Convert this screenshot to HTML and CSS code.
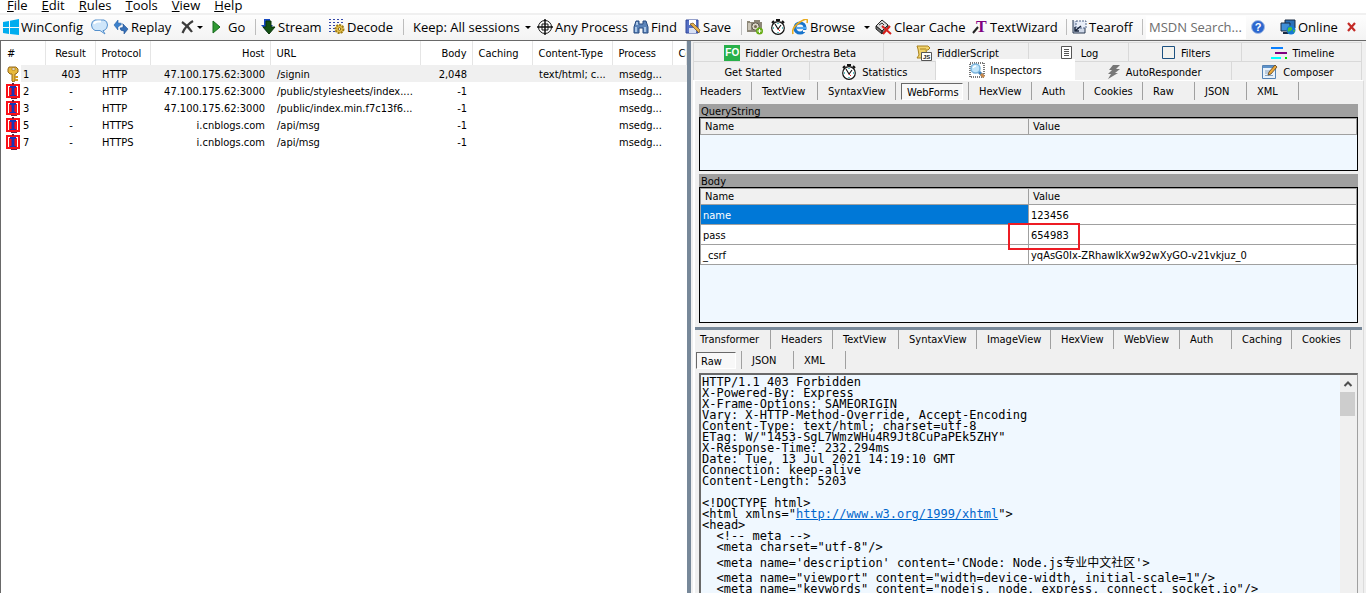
FILE: index.html
```
<!DOCTYPE html>
<html lang="en">
<head>
  <meta charset="UTF-8">
  <title>Progress Telerik Fiddler Web Debugger</title>
  <link rel="stylesheet" href="styles.css">
</head>
<body>

<!-- shared icons -->
<svg class="defs" width="0" height="0">
  <symbol id="clock" viewBox="0 0 16 16">
    <path d="M6 0h4v2H6z" fill="#111"/><path d="M12 2l2 2M4 2L2 4" stroke="#111" stroke-width="2"/>
    <circle cx="8" cy="9" r="6.3" fill="#fff" stroke="#111" stroke-width="1.2"/>
    <path d="M8 4v1M8 13v1M3 9h1M12 9h1" stroke="#2aa" stroke-width="1.4"/>
    <path d="M5 5l3 5 3-4" fill="none" stroke="#111" stroke-width="1.1"/><path d="M8 10l2 2" stroke="#d22"/>
  </symbol>
  <symbol id="blocked" viewBox="0 0 14 16">
    <path d="M0 1h14v14H0z" fill="#fb1018"/>
    <path d="M2 4h1v9H2zM11 4h1v9h-1zM2 3h2v1H2zM10 3h2v1h-2z" fill="#fff"/>
    <path d="M6 0h2v2H6zM5 15h6v1H5z" fill="#702040"/>
    <path d="M4 3h6v2H4zM6 5h2v7H6zM4 12h6v1H4z" fill="#1836b8"/>
    <path d="M5 5h1v7H5zM8 5h1v7H8z" fill="#9a1a58"/>
  </symbol>
</svg>

<nav class="menu">
  <a href="#"><u>F</u>ile</a>
  <a href="#"><u>E</u>dit</a>
  <a href="#"><u>R</u>ules</a>
  <a href="#"><u>T</u>ools</a>
  <a href="#"><u>V</u>iew</a>
  <a href="#"><u>H</u>elp</a>
</nav>

<div class="toolbar">
  <button><svg width="16" height="16" viewBox="0 0 16 16"><path d="M0 3l6-1v6H0zM7 1.800L16 0v8H7zM0 9h6v6l-6-1zM7 9h9v7l-9-1z" fill="#00adef"/></svg>WinConfig</button>
  <button aria-label="Comment"><svg width="17" height="16" viewBox="0 0 17 16"><path d="M4 1h9q3.500 1 3.500 5T13 11.500h-1l2 3.500-5-3.500H4Q.5 10 .5 6T4 1z" fill="#cfe6fa" stroke="#5590cc"/><path d="M3 5q1-2.500 4-2.500h3" fill="none" stroke="#fff" stroke-width="2"/></svg></button>
  <button><svg width="16" height="16" viewBox="0 0 16 16"><path d="M1 6l4-5v3q4 0 5 1-3 1-5 3v3z" fill="#3d82cc" stroke="#2863a8" stroke-width=".6"/><path d="M15 10l-4 5v-3Q7 12 7 9l3-.5V5z" fill="#3670b8" stroke="#1c4f90" stroke-width=".6"/><path d="M9 3v4M6 8v4" stroke="#f6f6f6" stroke-width=".8"/></svg>Replay</button>
  <button aria-label="Remove"><svg width="13" height="14" viewBox="0 0 13 14"><path d="M1 2q6 4 10 10M12 1Q5 5 1.500 13" fill="none" stroke="#3c3c3c" stroke-width="2.200"/></svg><i class="caret near"></i></button>
  <button class="go"><svg width="10" height="14" viewBox="0 0 10 14"><path d="M1 1l7 6-7 6z" fill="#2f9a32" stroke="#176a1c"/></svg>Go</button>
  <i class="sep"></i>
  <button><svg width="15" height="16" viewBox="0 0 15 16"><path d="M3 0h6v6h3L6 13 0 6h3z" fill="#1649c0"/><path d="M5 2h5v6h4l-6 7-6-7h3z" fill="#145214" stroke="#0b340b"/></svg>Stream</button>
  <button><svg width="16" height="16" viewBox="0 0 16 16"><path d="M1 0v15M5 0v15M9 0v6M13 0v5" stroke="#3448a8" stroke-width="2" stroke-dasharray="1 2"/><circle cx="10.500" cy="10" r="4" fill="#e7c34c" stroke="#a07c14" stroke-width="2" stroke-dasharray="2 1"/><circle cx="10.500" cy="10" r="1.300" fill="#fff" stroke="#80620c"/></svg>Decode</button>
  <i class="sep"></i>
  <button class="keep">Keep: All sessions<i class="caret"></i></button>
  <button><svg width="16" height="16" viewBox="0 0 16 16"><circle cx="8" cy="8" r="6.500" fill="#fff" stroke="#111"/><path d="M8 0v16M0 8h16" stroke="#111" stroke-width="1.500"/><path d="M5 5h6v6H5z" fill="none" stroke="#111"/></svg>Any Process</button>
  <button><svg width="16" height="16" viewBox="0 0 16 16"><path d="M3 2h3v3h4V2h3l2 6v6h-5V9H6v5H1V8z" fill="#5b83b8" stroke="#264a80"/><path d="M3 8v5M12 8v5M4 3v3" stroke="#c4dcf4" stroke-width="1.500"/></svg>Find</button>
  <button><svg width="16" height="16" viewBox="0 0 16 16"><path d="M1 1h12v13H1z" fill="#5570c4" stroke="#30469a"/><path d="M4 1h7v5H4z" fill="#fff"/><path d="M4 9h7v5H4z" fill="#d8e0f4"/><path d="M5 5l9 9 1-3-7-7z" fill="#e4b04a" stroke="#6b4b22" stroke-width=".7"/></svg>Save</button>
  <i class="sep"></i>
  <button aria-label="Screenshot"><svg width="17" height="16" viewBox="0 0 17 16"><path d="M0 2h3v1h4V1h6v2h2v10H0z" fill="#8d8778"/><path d="M1 4h3v7H1z" fill="#c9c4b6"/><circle cx="8.500" cy="7.500" r="3.700" fill="#ddd8ca" stroke="#5d584c"/><circle cx="8.500" cy="7.500" r="1.500" fill="#746a52"/><circle cx="12.500" cy="12" r="3.500" fill="#68ad16"/><path d="M12.500 10v4M10.500 12h4" stroke="#fff"/></svg></button>
  <button aria-label="Timer"><svg width="16" height="16"><use href="#clock"/></svg></button>
  <button><svg width="16" height="16" viewBox="0 0 16 16"><circle cx="8" cy="9" r="5" fill="none" stroke="#1874cc" stroke-width="3.200"/><path d="M5 9h9" stroke="#4fa6ee" stroke-width="2.200"/><path d="M11 11h5v2h-5z" fill="#f7f7f7"/><path d="M1 15Q-1 9 8 3t7 1" fill="none" stroke="#e8aa1c" stroke-width="1.600"/></svg>Browse<i class="caret wide"></i></button>
  <button><svg width="17" height="16" viewBox="0 0 17 16"><path d="M7 1l6 5-6 6-6-5z" fill="#ddd" stroke="#222"/><path d="M1 7l6 5v3L1 10zM7 12l6-6v3l-6 6z" fill="#777" stroke="#222"/><path d="M4 6l3-2 2 2" stroke="#333" fill="none"/><path d="M7 7l9 8M15 7l-7 8" stroke="#d8201c" stroke-width="2"/></svg>Clear Cache</button>
  <button><svg class="glyph-t" width="16" height="16" viewBox="0 0 16 16"><path d="M1 14l5-6" stroke="#222" stroke-width="2"/><text x="4" y="13">T</text></svg>TextWizard</button>
  <i class="sep"></i>
  <button><svg width="15" height="16" viewBox="0 0 15 16"><path d="M1 1v13h12V9" fill="#cfd8e8" stroke="#26364f"/><path d="M4 2h10v7H4z" fill="#e9eef8" stroke="#516588" stroke-dasharray="2 1"/><path d="M3 12l6-5M3 8v4h4" fill="none" stroke="#1a263c" stroke-width="1.500"/></svg>Tearoff</button>
  <i class="sep"></i>
  <input class="msdn" type="text" aria-label="MSDN search" placeholder="MSDN Search...">
  <button aria-label="Help"><svg class="glyph-q" width="16" height="16" viewBox="0 0 16 16"><circle cx="8" cy="8" r="6.500" fill="#2c67cf" stroke="#a4bce4"/><text x="8" y="12">?</text></svg></button>
  <button><svg width="16" height="16" viewBox="0 0 16 16"><path d="M5 1h10v8H5z" fill="#2b71b8" stroke="#1b2c44"/><path d="M1 4h9v8H1z" fill="#3f8fd8" stroke="#1b2c44"/><path d="M3 14h6" stroke="#1b2c44" stroke-width="2"/><circle cx="11" cy="11" r="4.500" fill="#1478d4"/><path d="M8 9q3-2 4 0t-2 3-1 2q-2-2-1-5zM13 11l2 0-1 3z" fill="#46c43c"/></svg>Online</button>
  <button class="close" aria-label="Close"><svg width="11" height="12" viewBox="0 0 11 12"><path d="M2 2l7 8M9 2l-7 8" stroke="#c42b26" stroke-width="2.200"/></svg></button>
</div>

<main class="split">
  <section class="sessions">
    <table>
      <colgroup><col class="c-num"><col class="c-res"><col class="c-pro"><col class="c-host"><col class="c-url"><col class="c-body"><col class="c-cache"><col class="c-type"><col class="c-proc"><col></colgroup>
      <thead>
        <tr><th>#</th><th class="mid">Result</th><th>Protocol</th><th class="right">Host</th><th>URL</th><th class="right">Body</th><th>Caching</th><th>Content-Type</th><th>Process</th><th>Comments</th></tr>
      </thead>
      <tbody>
        <tr class="focus">
          <td class="num"><svg width="14" height="16" viewBox="0 0 14 16"><path d="M3 1h7l2 2v3l-2 2H9v7l-2 1-1-1V8H4L2 6V3z" fill="#e8b93c" stroke="#95691a"/><path d="M6 2h3v2H6z" fill="#fff" stroke="#95691a" stroke-width=".6"/><path d="M9 10h3v2H9zM9 13h3v2H9z" fill="#d39a22"/></svg>1</td>
          <td class="mid">403</td><td>HTTP</td><td class="right">47.100.175.62:3000</td><td>/signin</td><td class="right">2,048</td><td></td><td>text/html; c...</td><td>msedg...</td><td></td>
        </tr>
        <tr>
          <td class="num"><svg width="14" height="16"><use href="#blocked"/></svg>2</td>
          <td class="mid">-</td><td>HTTP</td><td class="right">47.100.175.62:3000</td><td>/public/stylesheets/index....</td><td class="right">-1</td><td></td><td></td><td>msedg...</td><td></td>
        </tr>
        <tr>
          <td class="num"><svg width="14" height="16"><use href="#blocked"/></svg>3</td>
          <td class="mid">-</td><td>HTTP</td><td class="right">47.100.175.62:3000</td><td>/public/index.min.f7c13f6...</td><td class="right">-1</td><td></td><td></td><td>msedg...</td><td></td>
        </tr>
        <tr>
          <td class="num"><svg width="14" height="16"><use href="#blocked"/></svg>5</td>
          <td class="mid">-</td><td>HTTPS</td><td class="right">i.cnblogs.com</td><td>/api/msg</td><td class="right">-1</td><td></td><td></td><td>msedg...</td><td></td>
        </tr>
        <tr>
          <td class="num"><svg width="14" height="16"><use href="#blocked"/></svg>7</td>
          <td class="mid">-</td><td>HTTPS</td><td class="right">i.cnblogs.com</td><td>/api/msg</td><td class="right">-1</td><td></td><td></td><td>msedg...</td><td></td>
        </tr>
      </tbody>
    </table>
  </section>

  <section class="details">
    <div class="tabs top">
      <button><span class="fo">FO</span>Fiddler Orchestra Beta</button>
      <button><svg class="glyph-js" width="16" height="16" viewBox="0 0 16 16"><path d="M1 1h11l2 2-2 2h-2l1 5-3 3H1l2-3-1-6z" fill="#f2d36c" stroke="#a8821e"/><path d="M4 4h6" stroke="#a8821e"/><path d="M5.500 7.500h10v8h-10z" fill="#fff" stroke="#555"/><text x="7" y="14">JS</text></svg>FiddlerScript</button>
      <button class="log"><svg width="12" height="14" viewBox="0 0 12 14"><path d="M.5.5h10v12H.5z" fill="#fff" stroke="#555"/><path d="M3 3.500h5M3 5.500h5M3 7.500h5M3 9.500h5" stroke="#555"/></svg>Log</button>
      <button><svg width="14" height="14" viewBox="0 0 14 14"><path d="M.5.5h12v12H.5z" fill="#f2f2ee" stroke="#1c5180"/></svg>Filters</button>
      <button><svg width="16" height="14" viewBox="0 0 16 14"><path d="M0 2h12" stroke="#0a80ff" stroke-width="2"/><path d="M4 7h12" stroke="#800080" stroke-width="2"/><path d="M0 12h10" stroke="#0ff" stroke-width="2"/><path d="M14 12h2" stroke="#0d0" stroke-width="2"/></svg>Timeline</button>
    </div>
    <div class="tabs bottom">
      <button>Get Started</button>
      <button><svg width="16" height="16"><use href="#clock"/></svg>Statistics</button>
      <button class="on"><svg width="16" height="16" viewBox="0 0 16 16"><path d="M1 1h14v14H1z" fill="none" stroke="#777" stroke-width="2" stroke-dasharray="1 1"/><path d="M9 9l5 5" stroke="#3f7fb8" stroke-width="3"/><path d="M12 12l3 3" stroke="#c98a4c" stroke-width="3"/><circle cx="6.500" cy="6.500" r="4.500" fill="#bfe4fa" stroke="#7ab4dc" stroke-width="1.500"/><path d="M4 6q1-2 3-2" stroke="#fff" stroke-width="1.300" fill="none"/></svg>Inspectors</button>
      <button><svg width="14" height="16" viewBox="0 0 14 16"><path d="M6 1h7L9 5h4L8 9h3L1 15l3-5H1l4-4H2z" fill="#777"/></svg>AutoResponder</button>
      <button><svg width="16" height="16" viewBox="0 0 16 16"><path d="M.5 1.500h13v13H.5z" fill="#e8f1fa" stroke="#5482b4"/><path d="M1 2h12v2H1z" fill="#5d92c9"/><path d="M3 7h5M3 9h4M3 11.500h8" stroke="#8aa4bf"/><path d="M6 11l1-3 6-7 2 2-6 7z" fill="#eca93b" stroke="#5b4020" stroke-width=".8"/></svg>Composer</button>
    </div>

    <div class="panel">
      <div class="inspectors request">
        <button>Headers</button><button>TextView</button><button>SyntaxView</button><button class="on"><span>WebForms</span></button><button>HexView</button><button>Auth</button><button>Cookies</button><button>Raw</button><button>JSON</button><button>XML</button>
      </div>

      <h2>QueryString</h2>
      <div class="grid query">
        <table>
          <thead><tr><th>Name</th><th>Value</th></tr></thead>
        </table>
      </div>

      <h2>Body</h2>
      <div class="grid form">
        <table>
          <thead><tr><th>Name</th><th>Value</th></tr></thead>
          <tbody>
            <tr><td class="selected">name</td><td>123456</td></tr>
            <tr><td>pass</td><td class="marked">654983</td></tr>
            <tr><td>_csrf</td><td>yqAsG0Ix-ZRhawIkXw92wXyGO-v21vkjuz_0</td></tr>
          </tbody>
        </table>
      </div>

      <div class="inspectors response">
        <button>Transformer</button><button>Headers</button><button>TextView</button><button>SyntaxView</button><button>ImageView</button><button>HexView</button><button>WebView</button><button>Auth</button><button>Caching</button><button>Cookies</button>
      </div>
      <div class="inspectors second">
        <button class="on"><span>Raw</span></button><button>JSON</button><button>XML</button>
      </div>

      <div class="raw">
<pre>HTTP/1.1 403 Forbidden
X-Powered-By: Express
X-Frame-Options: SAMEORIGIN
Vary: X-HTTP-Method-Override, Accept-Encoding
Content-Type: text/html; charset=utf-8
ETag: W/"1453-SgL7WmzWHu4R9Jt8CuPaPEk5ZHY"
X-Response-Time: 232.294ms
Date: Tue, 13 Jul 2021 14:19:10 GMT
Connection: keep-alive
Content-Length: 5203

&lt;!DOCTYPE html&gt;
&lt;html xmlns="<a href="#">http://www.w3.org/1999/xhtml</a>"&gt;
&lt;head&gt;
  &lt;!-- meta --&gt;
  &lt;meta charset="utf-8"/&gt;
<span class="cjk">  &lt;meta name='description' content='CNode: Node.js专业中文社区'&gt;</span>
  &lt;meta name="viewport" content="width=device-width, initial-scale=1"/&gt;
  &lt;meta name="keywords" content="nodejs, node, express, connect, socket.io"/&gt;
</pre>
        <div class="scroll">
          <svg width="16" height="16" viewBox="0 0 16 16"><path d="M4.500 10L8 6.500l3.500 3.500" fill="none" stroke="#505050" stroke-width="2"/></svg>
          <div class="thumb"></div>
        </div>
      </div>
    </div>
  </section>
</main>

</body>
</html>
```
FILE: styles.css
```
* { box-sizing: border-box; }

body {
  margin: 0;
  height: 100vh;
  overflow: hidden;
  display: flex;
  flex-direction: column;
  background: #f0f0f0;
  color: #000;
  font-family: "DejaVu Sans Condensed", "DejaVu Sans", Tahoma, sans-serif;
  font-size: 11px;
}

button {
  padding: 0;
  border: 0;
  background: none;
  color: inherit;
  font: inherit;
  text-align: left;
  white-space: nowrap;
}

svg { flex: none; display: block; }
.defs { position: absolute; }

/* icons with letters in them */
.glyph-t text { font: bold 16px "Liberation Serif", serif; fill: #800080; }
.glyph-q text { font: bold 11px "Liberation Sans", sans-serif; fill: #fff; text-anchor: middle; }
.glyph-js text { font: bold 6px "Liberation Sans", sans-serif; fill: #222; }
.fo {
  width: 16px;
  height: 16px;
  background: #28b04a;
  color: #fff;
  font: bold 10px/16px "Liberation Sans", sans-serif;
  text-align: center;
}

/* menu and toolbar */
.menu {
  flex: none;
  display: flex;
  gap: 14px;
  height: 13px;
  padding-left: 7px;
  background: #fff;
  font: 13px/10px "Open Sans", sans-serif;
}
.menu a { color: #000; text-decoration: none; }

.toolbar {
  flex: none;
  display: grid;
  grid-template-columns: 88px 22px 68px 30px 44px 6px 68px 74px 10px 124px 96px 52px 56px 6px 23px 22px 83px 97px 94px 6px 70px 4px 104px 30px 66px 20px;
  align-items: center;
  height: 28px;
  padding: 0 0 1px 3px;
  border-top: 2px solid #f0f0f0;
  border-bottom: 1px solid #696969;
  background: linear-gradient(#fdfdfd, #f3f3f3);
  font: 13px/20px "Open Sans", sans-serif;
}
.toolbar button {
  display: flex;
  align-items: center;
  gap: 2px;
}
.toolbar .go { gap: 6px; padding-left: 1px; }
.sep { width: 1px; height: 16px; background: #bdbdbd; }
.caret {
  margin-left: 3px;
  border: 3px solid transparent;
  border-top-color: #000;
  border-bottom: 0;
}
.caret.near { margin-left: 1px; }
.caret.wide { margin-left: 7px; }
.msdn {
  width: 100px;
  height: 23px;
  padding: 0 3px;
  border: 0;
  background: #fff;
  font: inherit;
}
.msdn::placeholder { color: #6d6d6d; opacity: 1; }

.split {
  flex: 1;
  min-height: 0;
  display: grid;
  grid-template-columns: 691fr 675fr;
}

/* session list */
.sessions {
  overflow: hidden;
  border-left: 1px solid #696969;
  border-right: 4px solid #778899;
  background: #fff;
}
.sessions table {
  width: 100%;
  table-layout: fixed;
  border-collapse: collapse;
}
.sessions th, .sessions td {
  height: 17px;
  padding: 1px 5px 0 6px;
  overflow: hidden;
  text-align: left;
  font-weight: normal;
  line-height: 16px;
  white-space: nowrap;
}
.sessions td { padding: 2px 5px 0 7px; line-height: 15px; }
.sessions th {
  height: 24px;
  padding-top: 2px;
  border-right: 1px solid #e5e5e5;
}
.sessions .mid { text-align: center; }
.sessions .right { text-align: right; }
.sessions .num {
  display: flex;
  align-items: center;
  gap: 3px;
  padding: 1px 5px 0;
}
.focus td { background: #f0f0f0; }
.focus .num { background: linear-gradient(90deg, #fff 20px, #f0f0f0 20px); }
.c-num { width: 44px; }
.c-res { width: 50px; }
.c-pro { width: 55px; }
.c-host { width: 120px; }
.c-url { width: 150px; }
.c-body { width: 52px; }
.c-cache { width: 60px; }
.c-type { width: 80px; }
.c-proc { width: 60px; }

/* main tabs */
.details {
  min-width: 0;
  display: flex;
  flex-direction: column;
  padding: 1px 2px 0 2px;
}
.tabs {
  flex: none;
  display: grid;
  height: 19px;
  margin-right: 2px;
  border-left: 1px solid #d9d9d9;
}
.tabs.top { grid-template-columns: 190fr 144fr 100fr 113fr 120fr; }
.tabs.bottom { grid-template-columns: 116fr 126fr 138fr 157fr 130fr; }
.tabs button {
  display: flex;
  align-items: center;
  justify-content: center;
  gap: 5px;
  padding: 2px 0 0 3px;
  border-top: 1px solid #d9d9d9;
  border-right: 1px solid #d9d9d9;
}
.tabs .log { gap: 8px; }
.tabs .on {
  margin-top: -2px;
  padding: 1px 0 0;
  border: 0;
  background: #fff;
}

.panel {
  flex: 1;
  min-height: 0;
  display: flex;
  flex-direction: column;
  padding: 1px 5px 0 0;
  border-top: 1px solid #fff;
  border-left: 2px solid #fff;
  border-right: 1px solid #dcdcdc;
}

/* inspector buttons */
.inspectors {
  flex: none;
  display: grid;
  height: 18px;
}
.inspectors button {
  padding-left: 10px;
  border-right: 1px solid #a0a0a0;
}
.inspectors button:first-child { padding-left: 5px; }
.request { grid-template-columns: 57px 66px 78px 73px 63px 52px 59px 52px 52px 52px; }
.response {
  grid-template-columns: 76px 62px 66px 78px 74px 63px 66px 52px 60px 59px;
  height: 22px;
  margin-right: -4px;
  border-top: 3px solid #778899;
}
.second { grid-template-columns: 47px 52px 52px; margin-top: 2px; }
.inspectors .on { padding: 0 5px; }
.inspectors .on:first-child { padding: 0 5px 0 1px; }
.inspectors .on span {
  display: block;
  height: 17px;
  padding: 2px 5px 0;
  border: 1px solid #fff;
  border-top-color: #696969;
  border-left-color: #696969;
  background: #f8f8f8;
}
.inspectors .on:first-child span { padding-left: 4px; }

/* name / value grids */
h2 {
  flex: none;
  height: 13px;
  margin: 4px 0 0 4px;
  padding-left: 2px;
  background: #a0a0a0;
  font-size: 11px;
  font-weight: normal;
  line-height: 15px;
}
.grid {
  flex: none;
  margin-left: 4px;
  border: 1px solid #000;
  background: #f0f8ff;
}
.query { height: 54px; margin-bottom: -1px; }
.form { height: 136px; margin-bottom: 4px; }
.grid table {
  width: 100%;
  table-layout: fixed;
  border-collapse: collapse;
}
.grid th, .grid td {
  height: 20px;
  padding: 2px 2px 0;
  border: 1px solid #a0a0a0;
  background: #fff;
  font-weight: normal;
  line-height: 14px;
  text-align: left;
}
.grid th {
  height: 16px;
  padding: 1px 4px 0;
  background: #f0f0f0;
}
.grid .selected { background: #0078d7; color: #fff; }
.marked { position: relative; }
.marked::after {
  content: "";
  position: absolute;
  left: -21px;
  top: -2px;
  width: 68px;
  height: 23px;
  border: 2px solid #ed1c24;
}

/* raw response */
.raw {
  flex: 1;
  min-height: 0;
  display: flex;
  overflow: hidden;
  margin: 4px 0 0 4px;
  border: 1px solid #a0a0a0;
  border-top: 2px solid #696969;
  border-left: 2px solid #696969;
  border-bottom: 0;
  background: #f0f8ff;
}
.raw pre {
  flex: 1;
  margin: 0;
  padding: 2px 0 0 1px;
  overflow: hidden;
  font: 12px/11px "DejaVu Sans Mono", "Noto Sans CJK SC", monospace;
}
.raw a { color: #0066cc; }
.cjk {
  display: inline-block;
  line-height: 20px;
}
.scroll { width: 17px; padding-top: 1px; background: #f0f0f0; }
.thumb {
  width: 15px;
  height: 24px;
  background: #cdcdcd;
}
```
